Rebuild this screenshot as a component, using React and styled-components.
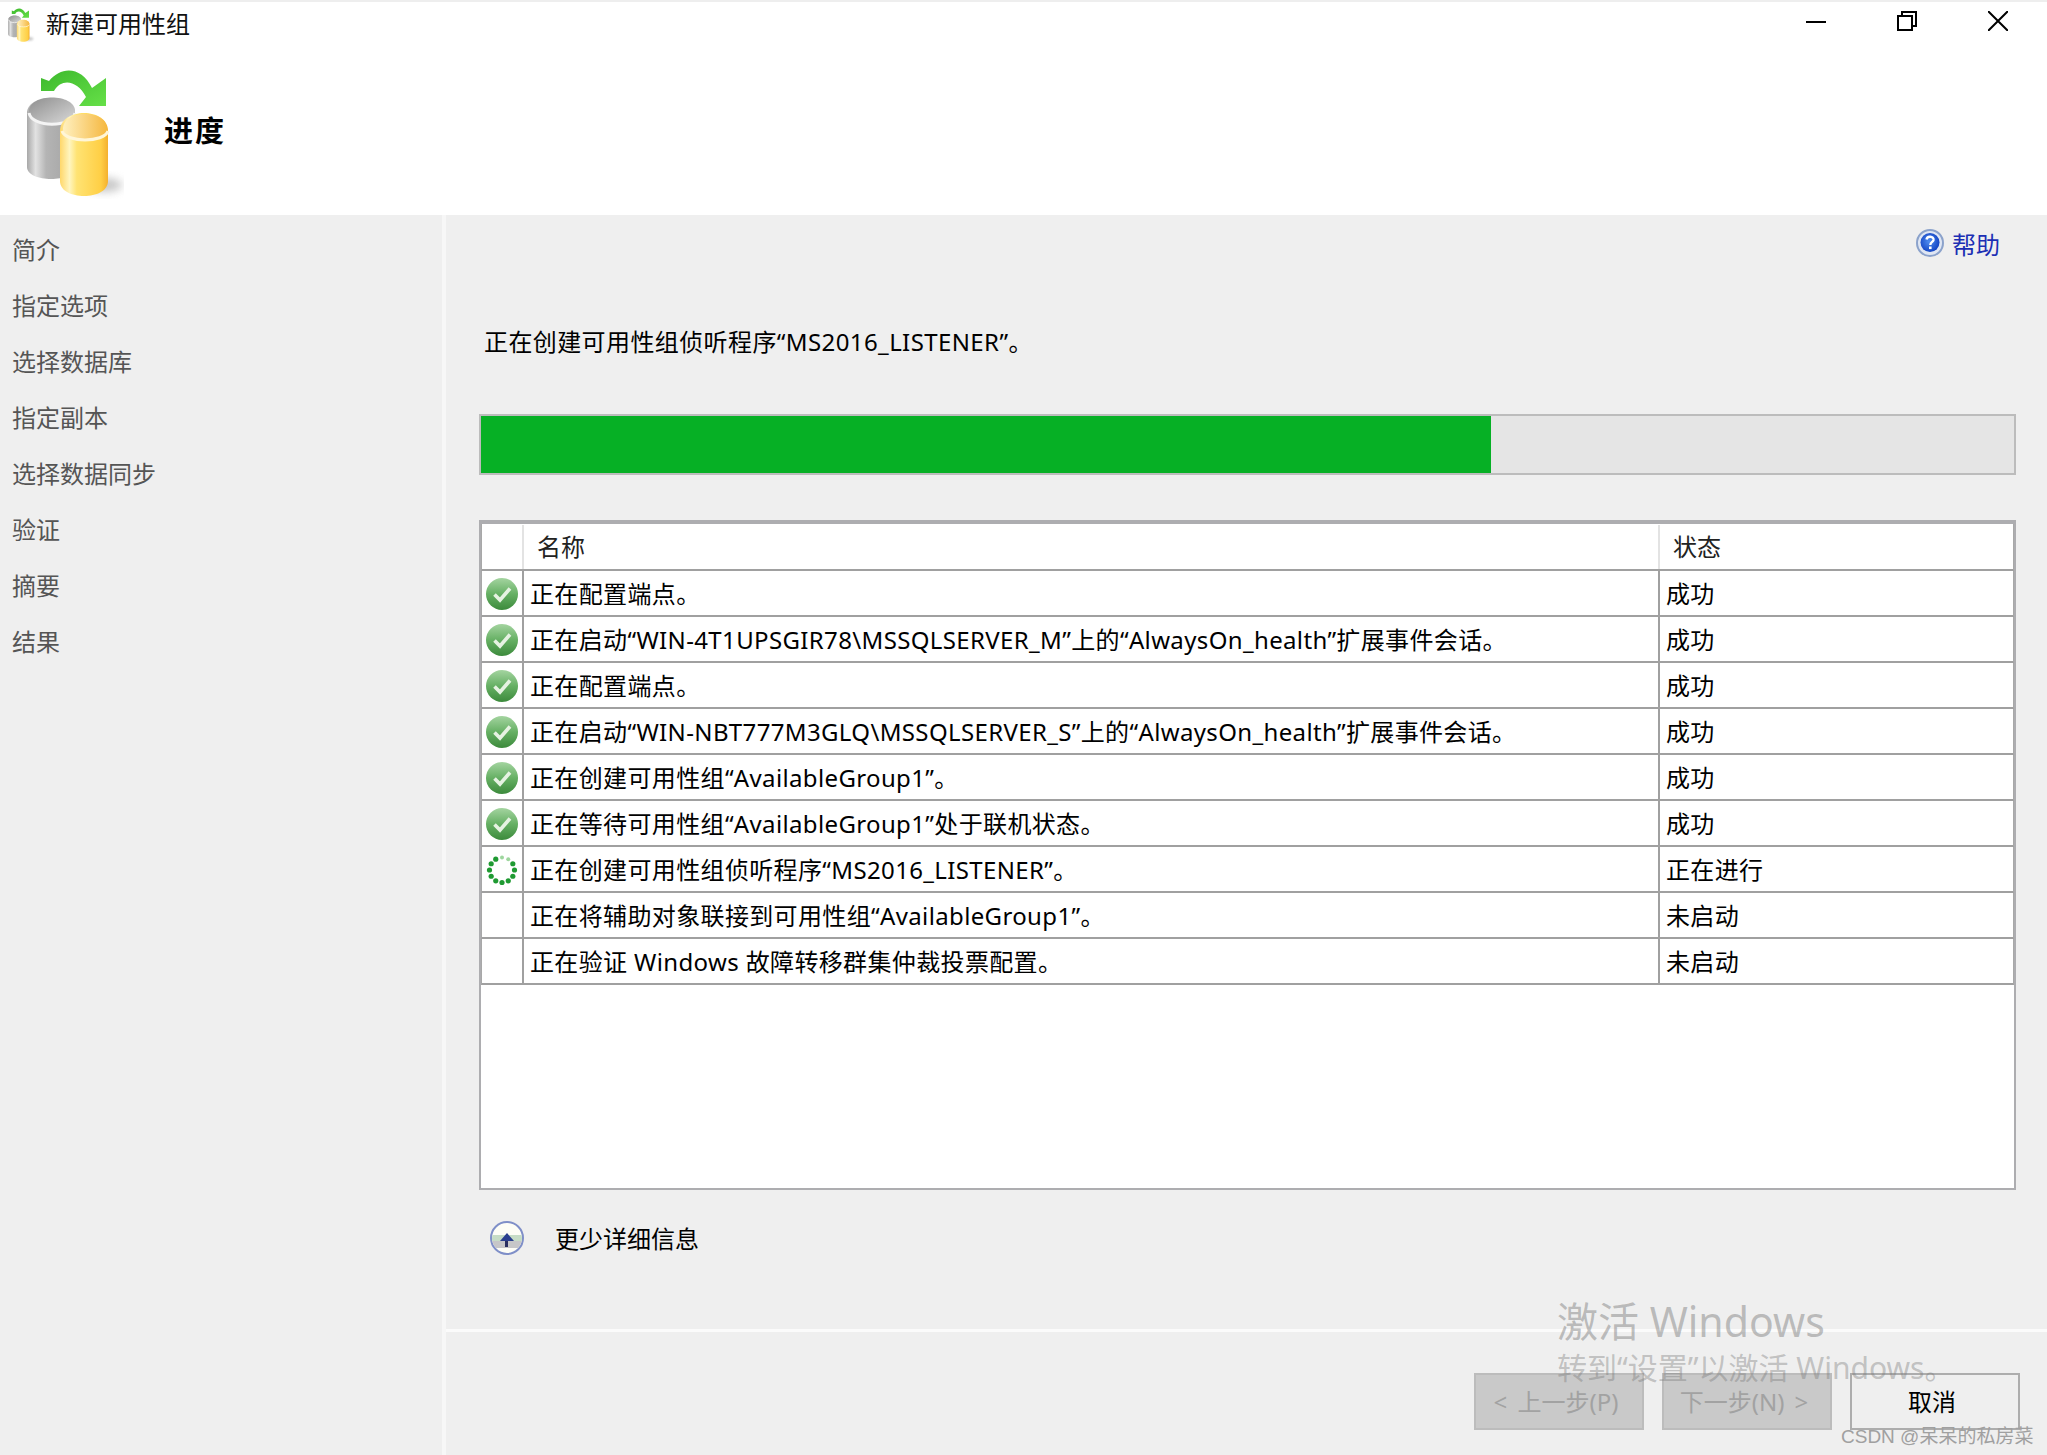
import styled, { createGlobalStyle } from "styled-components";

const GlobalStyle = createGlobalStyle`
  html, body {
    margin: 0;
    padding: 0;
    background: #efefef;
  }
  body {
    font-family: "Noto Sans", "Noto Sans CJK SC", sans-serif;
    color: #000;
  }
`;

const navItems = ["简介", "指定选项", "选择数据库", "指定副本", "选择数据同步", "验证", "摘要", "结果"];

const rows = [
  { icon: "ok", name: "正在配置端点。", status: "成功" },
  { icon: "ok", name: "正在启动“WIN-4T1UPSGIR78\\MSSQLSERVER_M”上的“AlwaysOn_health”扩展事件会话。", status: "成功" },
  { icon: "ok", name: "正在配置端点。", status: "成功" },
  { icon: "ok", name: "正在启动“WIN-NBT777M3GLQ\\MSSQLSERVER_S”上的“AlwaysOn_health”扩展事件会话。", status: "成功" },
  { icon: "ok", name: "正在创建可用性组“AvailableGroup1”。", status: "成功" },
  { icon: "ok", name: "正在等待可用性组“AvailableGroup1”处于联机状态。", status: "成功" },
  { icon: "busy", name: "正在创建可用性组侦听程序“MS2016_LISTENER”。", status: "正在进行" },
  { icon: null, name: "正在将辅助对象联接到可用性组“AvailableGroup1”。", status: "未启动" },
  { icon: null, name: "正在验证 Windows 故障转移群集仲裁投票配置。", status: "未启动" },
];

const DbIcon = ({ width, height }) => (
  <svg width={width} height={height} viewBox="20 64 104 136">
    <defs>
      <linearGradient id="greyBody" x1="0" y1="0" x2="1" y2="0">
        <stop offset="0" stopColor="#a8a8a8" />
        <stop offset="0.18" stopColor="#e2e2e2" />
        <stop offset="0.4" stopColor="#b4b4b4" />
        <stop offset="1" stopColor="#a2a2a2" />
      </linearGradient>
      <linearGradient id="greyTop" x1="0" y1="0" x2="1" y2="1">
        <stop offset="0" stopColor="#8e8e8e" />
        <stop offset="1" stopColor="#d8d8d8" />
      </linearGradient>
      <linearGradient id="yellowBody" x1="0" y1="0" x2="1" y2="0">
        <stop offset="0" stopColor="#ffd76a" />
        <stop offset="0.2" stopColor="#fff5bf" />
        <stop offset="0.35" stopColor="#ffe373" />
        <stop offset="0.85" stopColor="#ffcf45" />
        <stop offset="1" stopColor="#f4b02e" />
      </linearGradient>
      <linearGradient id="yellowTop" x1="0" y1="0" x2="1" y2="0">
        <stop offset="0" stopColor="#fff0c0" />
        <stop offset="1" stopColor="#f5b840" />
      </linearGradient>
      <linearGradient id="arrowFill" x1="0" y1="0" x2="1" y2="1">
        <stop offset="0" stopColor="#3cb82c" />
        <stop offset="1" stopColor="#66e048" />
      </linearGradient>
      <filter id="softShadow" x="-50%" y="-50%" width="200%" height="200%">
        <feGaussianBlur stdDeviation="4" />
      </filter>
    </defs>
    <ellipse cx="104" cy="184" rx="18" ry="7" fill="#999" opacity="0.55" filter="url(#softShadow)" />
    <path d="M27 112 C27 92 75 92 75 112 V166 C75 182 27 182 27 166 Z" fill="url(#greyBody)" />
    <path d="M29 110 C29 92 75 92 75 110 C75 126 29 126 29 110 Z" fill="url(#greyTop)" />
    <path d="M29 112 C32 127 72 127 75 112" fill="none" stroke="#f4f4f4" strokeWidth="3" />
    <path d="M60 130 C60 106 108 106 108 130 V180 C108 200 60 200 60 180 Z" fill="url(#yellowBody)" />
    <path d="M63 128 C63 108 107 108 107 128 C107 142 63 142 63 128 Z" fill="url(#yellowTop)" />
    <path d="M62 130 C66 142 104 142 108 130" fill="none" stroke="#fff6d8" strokeWidth="3" />
    <path
      d="M41 90 V77 L49 80 C62 64 82 66 92 87 L106 77 V105 H79 L86 96 C78 80 62 76 54 90 Z"
      fill="url(#arrowFill)"
    />
  </svg>
);

const CheckIcon = () => (
  <svg width="32" height="32" viewBox="0 0 32 32">
    <defs>
      <linearGradient id="okFill" x1="0" y1="0" x2="0" y2="1">
        <stop offset="0" stopColor="#a4d4a0" />
        <stop offset="0.5" stopColor="#66b064" />
        <stop offset="1" stopColor="#3c8a3c" />
      </linearGradient>
    </defs>
    <circle cx="16" cy="16" r="16" fill="url(#okFill)" />
    <path d="M8.5 16.5 L14 22 L24 10.5" fill="none" stroke="#e6f2e2" strokeWidth="3.6" />
  </svg>
);

const SpinnerIcon = () => (
  <svg width="32" height="32" viewBox="0 0 32 32">
    {Array.from({ length: 12 }).map((_, i) => {
      const a = (i * Math.PI) / 6;
      return (
        <circle
          key={i}
          cx={16 + 12.5 * Math.sin(a)}
          cy={16 - 12.5 * Math.cos(a)}
          r={i === 0 || i === 1 ? 2 : 2.6}
          fill={i === 0 || i === 1 ? "#9ed69e" : "#1f9a32"}
        />
      );
    })}
  </svg>
);

const HelpIcon = () => (
  <svg width="28" height="28" viewBox="0 0 28 28">
    <defs>
      <radialGradient id="helpFill" cx="0.45" cy="0.45" r="0.6">
        <stop offset="0" stopColor="#4f8df0" />
        <stop offset="1" stopColor="#0f3fc0" />
      </radialGradient>
    </defs>
    <circle cx="14" cy="14" r="13" fill="#dfe6f3" stroke="#8ba2cb" strokeWidth="2" />
    <circle cx="14" cy="13.5" r="9.5" fill="url(#helpFill)" />
    <path d="M10.5 10.5 C11 6.5 18 7 17.5 11 C17.2 13 14.5 13 14.3 16" fill="none" stroke="#fff" strokeWidth="2.4" />
    <rect x="13" y="17.5" width="2.6" height="2.6" fill="#fff" />
  </svg>
);

const CollapseIcon = () => (
  <svg width="34" height="34" viewBox="0 0 34 34">
    <circle cx="17" cy="17" r="16" fill="#fdfdf6" stroke="#7f8fc8" strokeWidth="2" />
    <path d="M2.5 14 H31.5 A15 15 0 0 1 31.8 20 H2.2 A15 15 0 0 1 2.5 14 Z" fill="#c6dcc6" />
    <path d="M2.2 20 H31.8 A15 15 0 0 1 28 27 H6 A15 15 0 0 1 2.2 20 Z" fill="#c6c6c8" />
    <path d="M17 12 L24 20 H10 Z" fill="#2a3f8e" />
    <rect x="15" y="20" width="3" height="6" fill="#2a2f60" />
  </svg>
);

const App = () => (
  <>
    <GlobalStyle />
    <Window>
      <TitleBar>
        <TitleLeft>
          <DbIcon width={30} height={36} />
          <TitleText>新建可用性组</TitleText>
        </TitleLeft>
        <WindowControls>
          <ControlIcon viewBox="0 0 20 20">
            <path d="M0 11 H20" stroke="#000" strokeWidth="2" />
          </ControlIcon>
          <ControlIcon viewBox="0 0 20 20">
            <path d="M1 5 H15 V19 H1 Z M5 5 V1 H19 V15 H15" fill="none" stroke="#000" strokeWidth="2" />
          </ControlIcon>
          <ControlIcon viewBox="0 0 20 20">
            <path d="M0 0 L20 20 M20 0 L0 20" stroke="#000" strokeWidth="2" />
          </ControlIcon>
        </WindowControls>
      </TitleBar>
      <Banner>
        <DbIcon width={104} height={136} />
        <BannerTitle>进度</BannerTitle>
      </Banner>
      <Body>
        <Sidebar>
          {navItems.map((item) => (
            <NavItem key={item}>{item}</NavItem>
          ))}
        </Sidebar>
        <Content>
          <Main>
            <HelpRow>
              <HelpIcon />
              <HelpLink>帮助</HelpLink>
            </HelpRow>
            <Message>正在创建可用性组侦听程序“MS2016_LISTENER”。</Message>
            <ProgressTrack>
              <ProgressFill style={{ width: `${(1013 / 1537) * 100}%` }} />
            </ProgressTrack>
            <Table>
              <HeaderRow>
                <HeaderCell />
                <HeaderCell $pad={13}>名称</HeaderCell>
                <HeaderCell $pad={13} $last>状态</HeaderCell>
              </HeaderRow>
              {rows.map((row, i) => (
                <Row key={i}>
                  <IconCell>
                    {row.icon === "ok" && <CheckIcon />}
                    {row.icon === "busy" && <SpinnerIcon />}
                  </IconCell>
                  <Cell>{row.name}</Cell>
                  <Cell $last>{row.status}</Cell>
                </Row>
              ))}
            </Table>
            <DetailsRow>
              <CollapseIcon />
              <DetailsText>更少详细信息</DetailsText>
            </DetailsRow>
          </Main>
          <Footer>
            <WizardButton disabled>&lt; 上一步(P)</WizardButton>
            <WizardButton disabled>下一步(N) &gt;</WizardButton>
            <WizardButton>取消</WizardButton>
          </Footer>
        </Content>
      </Body>
      <Watermark>
        <WatermarkTitle>激活 Windows</WatermarkTitle>
        <WatermarkHint>转到“设置”以激活 Windows。</WatermarkHint>
      </Watermark>
      <Credit>CSDN @呆呆的私房菜</Credit>
    </Window>
  </>
);

const Window = styled.div`
  position: relative;
  width: 2047px;
  height: 1455px;
  overflow: hidden;
  display: flex;
  flex-direction: column;
  background: #efefef;
`;

const TitleBar = styled.div`
  display: flex;
  justify-content: space-between;
  align-items: center;
  height: 46px;
  background: #fff;
  border-top: 2px solid #eeeeee;
`;

const TitleLeft = styled.div`
  display: flex;
  align-items: center;
  gap: 11px;
  padding-left: 5px;
`;

const TitleText = styled.span`
  font-size: 24px;
  line-height: 44px;
  margin-bottom: 2px;
  color: #111;
`;

const WindowControls = styled.div`
  display: flex;
  align-items: center;
  padding-right: 39px;
`;

const ControlIcon = styled.svg`
  width: 20px;
  height: 20px;
  display: block;
  margin-bottom: 9px;
  margin-left: 71px;
`;

const Banner = styled.div`
  display: flex;
  align-items: center;
  height: 167px;
  padding-left: 20px;
  gap: 40px;
  background: #fff;
  box-sizing: border-box;
  svg {
    margin-top: 2px;
  }
`;

const BannerTitle = styled.h1`
  margin: 0 0 5px 0;
  font-family: "Noto Sans CJK SC", sans-serif;
  font-size: 29px;
  font-weight: 700;
  letter-spacing: 2px;
  line-height: 40px;
`;

const Body = styled.div`
  flex: 1;
  display: flex;
  min-height: 0;
`;

const Sidebar = styled.nav`
  width: 442px;
  flex-shrink: 0;
  box-sizing: border-box;
  padding: 7px 0 0 12px;
`;

const NavItem = styled.div`
  height: 56px;
  line-height: 56px;
  font-size: 24px;
  color: #555;
`;

const Content = styled.div`
  flex: 1;
  display: flex;
  flex-direction: column;
  border-left: 4px solid #f7f7f7;
  min-width: 0;
`;

const Main = styled.div`
  height: 1117px;
  box-sizing: border-box;
  padding: 13px 31px 0 33px;
  border-bottom: 3px solid #fbfbfb;
`;

const HelpRow = styled.div`
  display: flex;
  align-items: center;
  justify-content: flex-end;
  gap: 8px;
  height: 30px;
  padding-right: 16px;
`;

const HelpLink = styled.span`
  font-size: 24px;
  color: #1c2fb4;
`;

const Message = styled.p`
  margin: 67px 0 0 5px;
  font-size: 24px;
  line-height: 34px;
  letter-spacing: 0.4px;
  white-space: nowrap;
`;

const ProgressTrack = styled.div`
  margin-top: 55px;
  height: 61px;
  box-sizing: border-box;
  background: #e5e5e5;
  border: 2px solid #bcbcbc;
`;

const ProgressFill = styled.div`
  height: 100%;
  background: #06b025;
`;

const Table = styled.div`
  margin-top: 45px;
  height: 670px;
  box-sizing: border-box;
  background: #fff;
  border: 2px solid #adadb0;
  border-top-width: 4px;
`;

const HeaderRow = styled.div`
  display: grid;
  grid-template-columns: 42px 1136px 1fr;
  height: 47px;
  padding-top: 1px;
  box-sizing: border-box;
  border-left: 1px solid #a8a8a8;
  border-right: 1px solid #a8a8a8;
  border-bottom: 2px solid #a0a0a0;
`;

const HeaderCell = styled.div`
  padding-left: ${(p) => p.$pad || 0}px;
  font-size: 24px;
  line-height: 44px;
  color: #222;
  border-right: ${(p) => (p.$last ? "none" : "2px solid #e3e3e3")};
`;

const Row = styled.div`
  display: grid;
  grid-template-columns: 42px 1136px 1fr;
  height: 46px;
  box-sizing: border-box;
  border-left: 1px solid #a8a8a8;
  border-right: 1px solid #a8a8a8;
  border-bottom: 2px solid #a0a0a0;
`;

const Cell = styled.div`
  padding-left: 6px;
  font-size: 24px;
  line-height: 45px;
  letter-spacing: 0.36px;
  white-space: nowrap;
  border-right: ${(p) => (p.$last ? "none" : "2px solid #a0a0a0")};
`;

const IconCell = styled.div`
  display: flex;
  align-items: center;
  justify-content: center;
  padding-right: 1px;
  border-right: 2px solid #a0a0a0;
`;

const DetailsRow = styled.div`
  display: flex;
  align-items: center;
  margin: 30px 0 0 11px;
  gap: 31px;
`;

const DetailsText = styled.span`
  font-size: 24px;
`;

const Footer = styled.div`
  display: flex;
  justify-content: flex-end;
  gap: 18px;
  padding: 41px 27px 0 0;
`;

const WizardButton = styled.button`
  width: 170px;
  height: 57px;
  box-sizing: border-box;
  padding: 0 6px 2px 0;
  font-family: "Noto Sans", "Noto Sans CJK SC", sans-serif;
  font-size: 24px;
  word-spacing: 4px;
  color: ${(p) => (p.disabled ? "#a2a2a2" : "#000")};
  background: ${(p) => (p.disabled ? "#c9c9c9" : "#efefef")};
  border: 2px solid ${(p) => (p.disabled ? "#bcbcbc" : "#adadad")};
`;

const Watermark = styled.div`
  position: absolute;
  left: 1557px;
  top: 1295px;
  pointer-events: none;
`;

const WatermarkTitle = styled.div`
  font-size: 41px;
  line-height: 52px;
  color: rgba(120, 120, 120, 0.45);
  white-space: nowrap;
`;

const WatermarkHint = styled.div`
  font-size: 30px;
  line-height: 42px;
  color: rgba(120, 120, 120, 0.4);
  white-space: nowrap;
`;

const Credit = styled.div`
  position: absolute;
  left: 1841px;
  top: 1425px;
  font-family: "Liberation Sans", "Noto Sans CJK SC", sans-serif;
  font-size: 19px;
  line-height: 24px;
  color: #a0a0a0;
  white-space: nowrap;
`;

export default App;
